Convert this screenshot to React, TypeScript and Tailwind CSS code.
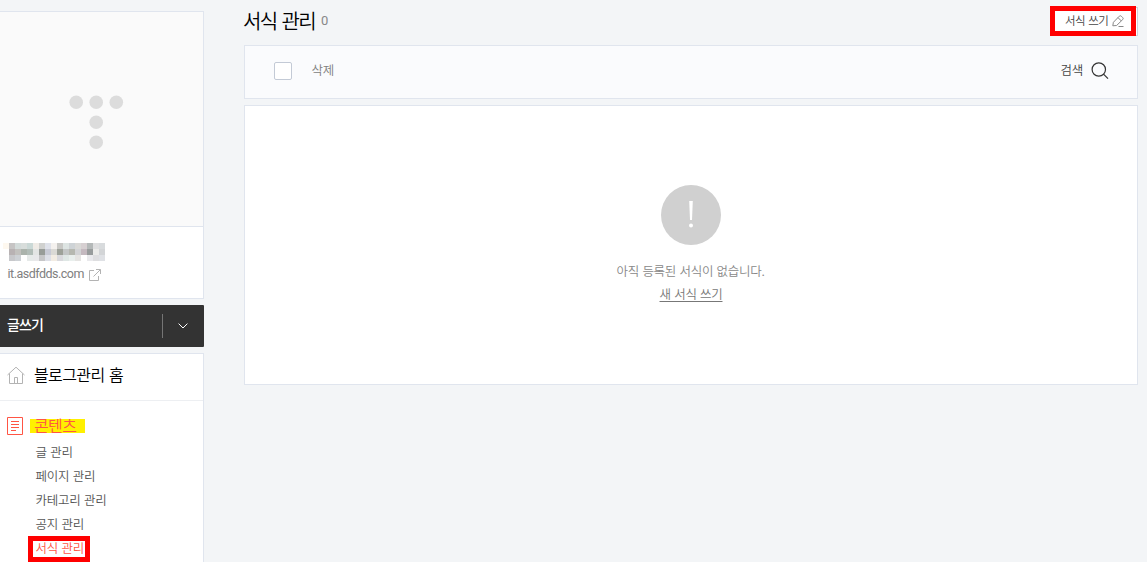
import React from 'react';

const contentMenu = [
  { label: '글 관리' },
  { label: '페이지 관리' },
  { label: '카테고리 관리' },
  { label: '공지 관리' },
  { label: '서식 관리', active: true },
];

// pixelated blog name, one entry per 6px tile
const mosaic = [
  ['#fef8ef', '#c6c4c4', '#d3dbda', '#d8dddb', '#cad8d6', '#efebe6', '#d0d1cf', '#dfe2ea', '#f4f1ee', '#c8c8c5', '#dde4e2', '#ced3d6', '#d9d9d7', '#d6cfd1', '#b4b8b8', '#dededf', '#d8dbdd'],
  ['#ffffff', '#b8b2b3', '#c2c1be', '#abb3ac', '#b2bdb8', '#e3e5e4', '#989c98', '#c8cad5', '#dad9d5', '#9da199', '#c3c6c6', '#b6b8b0', '#d2d3d5', '#c4b9bf', '#989c9c', '#ebebe9', '#d3d5d7'],
  ['#ffffff', '#c7c8cb', '#cdd1d5', '#ffffff', '#e6eae9', '#e8e8ea', '#c6c6c8', '#dddfe7', '#f2ece3', '#d9d9dd', '#dfe7e5', '#e9efed', '#e5e4e2', '#ffffff', '#e9e9ec', '#dedee0', '#dfe1e5'],
];

const TistoryMark = () => (
  <svg width="56" height="56" viewBox="0 0 56 56" fill="#dcdcdc">
    <circle cx="8.200" cy="8.200" r="6.800" />
    <circle cx="28.200" cy="8.200" r="6.800" />
    <circle cx="48.300" cy="8.200" r="6.800" />
    <circle cx="28.200" cy="28.200" r="6.800" />
    <circle cx="28.200" cy="48.300" r="6.800" />
  </svg>
);

const Sidebar = () => (
  <aside className="w-[204px] shrink-0 pt-[11px]">
    <div className="border border-l-0 border-[#e0e5ee] bg-white">
      <div className="flex h-[215px] items-center justify-center border-b border-[#e0e5ee] bg-[#fafafa] pr-[11px] pt-[5px]">
        <TistoryMark />
      </div>
      <div className="h-[71px] pl-[3px] pt-[16px]">
        <div className="grid w-[102px] grid-cols-[repeat(17,6px)] auto-rows-[6px]">
          {mosaic.flat().map((color, i) => (
            <span key={i} style={{ backgroundColor: color }} />
          ))}
        </div>
        <a className="mt-[3px] flex items-center pl-[4.5px] font-[Roboto,sans-serif] text-[12.5px] font-normal leading-5 tracking-[-0.5px] text-[#808080]">
          it.asdfdds.com
          <svg className="ml-[5px] mt-px" width="12" height="12" viewBox="0 0 12 12" fill="none" stroke="#b3b3b3">
            <path d="M5 1.500H.500v10h9V7M7 .500h4.500v4.500M11.300.700 4.500 7.500" />
          </svg>
        </a>
      </div>
    </div>

    <div className="mt-[6px] flex h-[42px] items-center rounded-r-[1px] bg-[#333] text-white">
      <span className="-mt-[5px] flex-1 pl-[7px] text-[14px] font-medium leading-5 tracking-[-0.9px]">글쓰기</span>
      <span className="h-6 w-px bg-[#757575]" />
      <span className="-mt-px flex w-[41px] justify-center pr-[2px]">
        <svg width="10" height="6" viewBox="0 0 10 6" fill="none" stroke="#fff">
          <path d="M.600.600 5 5 9.400.600" />
        </svg>
      </span>
    </div>

    <nav className="mt-[6px] h-[220px] border border-l-0 border-[#e0e5ee] bg-white">
      <div className="flex h-[47px] items-center border-b border-[#edeff2] pl-[7px] text-[16px] tracking-[-0.6px] [word-spacing:1.5px] text-black">
        <svg className="-mt-[4px]" width="18" height="18" viewBox="0 0 18 18" fill="none" stroke="#b3b3b3">
          <path d="M.500 9 9 1.200 17.500 9M2.500 7.500v10h13v-10M7.500 17.500v-6h3v6" />
        </svg>
        <span className="ml-[9px] -mt-[6px]">블로그관리 홈</span>
      </div>
      <div className="flex items-center pt-[16px]">
        <svg className="ml-[7px]" width="16" height="18" viewBox="0 0 16 18" fill="none" stroke="#ff5544">
          <path d="M.500.500h15v17H.500zM4 4.500h8M4 7.500h8M4 10.500h8M4 13.500h5" />
        </svg>
        <span className="ml-[7px] flex h-[14px] w-[55px] items-center bg-[#fff000] pb-[2px] pl-[4px] text-[16px] leading-[14px] tracking-[-0.6px] text-[#ff5544]">
          콘텐츠
        </span>
      </div>
      <ul className="mt-[5px] pl-[35.5px] text-[12.5px] leading-6 tracking-[-0.25px] [word-spacing:1px] text-[#555]">
        {contentMenu.map((item) => (
          <li key={item.label} className={item.active ? 'relative text-[#ff5544]' : ''}>
            {item.label}
            {item.active && <span className="absolute -left-[8px] top-0 h-[26px] w-[62px] border-[5px] border-[#ff0000]" />}
          </li>
        ))}
      </ul>
    </nav>
  </aside>
);

const TemplatePage = () => (
  <main className="ml-10 w-[894px]">
    <div className="flex h-[45px] items-start justify-between">
      <h2 className="-ml-px flex items-center pt-[5px] text-[20px] leading-[29px] tracking-[-1.6px] [word-spacing:2px] text-black">
        서식 관리
        <span className="ml-[6px] mt-px font-[Roboto,sans-serif] text-[13px] font-normal tracking-normal text-[#888]">0</span>
      </h2>
      <button className="relative mt-[7px] flex h-[29px] w-[88px] items-center border border-[#ced3dc] bg-white pl-[14px] text-[11.5px] font-[350] tracking-[-0.5px] [word-spacing:1px] text-[#444]">
        <span className="-mt-px">서식 쓰기</span>
        <svg className="ml-[4px] -mt-[2px]" width="12" height="12" viewBox="0 0 12 12" fill="none" stroke="#888">
          <path d="M.800 10.800 1.400 7.300 7.300 1.200Q8.300.200 9.300 1.200L10.700 2.600Q11.700 3.600 10.700 4.600L4.600 10.500ZM6 2.600 9.400 6M6.500 11.500h5" />
        </svg>
        <span className="absolute -left-[1px] -top-[2px] h-[30px] w-[86px] border-[5px] border-[#ff0000]" />
      </button>
    </div>

    <div className="flex h-[54px] items-center border border-[#e0e5ee] bg-[#fafbfd] pl-[29px] pr-[28px] text-[12.5px] tracking-[-0.25px]">
      <span className="-mt-[2px] size-[18px] rounded-[2px] border border-[#c3cad6] bg-white" />
      <span className="-mt-[3px] ml-[19.5px] flex-1 text-[#808080]">삭제</span>
      <span className="-mt-[3px] text-[#444]">검색</span>
      <svg className="-mt-[2px] ml-[8px]" width="18" height="18" viewBox="0 0 18 18" fill="none" stroke="#333" strokeWidth="1.200">
        <circle cx="7.800" cy="7.500" r="6.700" />
        <path d="m12.500 12.200 4.500 4.500" />
      </svg>
    </div>

    <div className="mt-[6px] flex h-[280px] flex-col items-center border border-[#e0e5ee] bg-white pt-[79px] text-[12.5px] tracking-[-0.3px] [word-spacing:1px] text-[#888]">
      <svg width="60" height="60" viewBox="0 0 60 60">
        <circle cx="30" cy="30" r="30" fill="#d0d0d0" />
        <path d="M28.200 16h3.600l-.800 19h-2z" fill="#fff" />
        <circle cx="30" cy="40.500" r="2" fill="#fff" />
      </svg>
      <p className="mt-[14px] pr-px leading-[23px]">아직 등록된 서식이 없습니다.</p>
      <a className="leading-[23px] text-[#777] underline underline-offset-2">새 서식 쓰기</a>
    </div>
  </main>
);

const App: React.FC = () => {
  return (
    <div className="flex h-[562px] w-[1147px] overflow-hidden bg-[#f3f5f7] font-['Noto_Sans_CJK_KR',sans-serif] font-[350]">
      <Sidebar />
      <TemplatePage />
    </div>
  );
};

export default App;
